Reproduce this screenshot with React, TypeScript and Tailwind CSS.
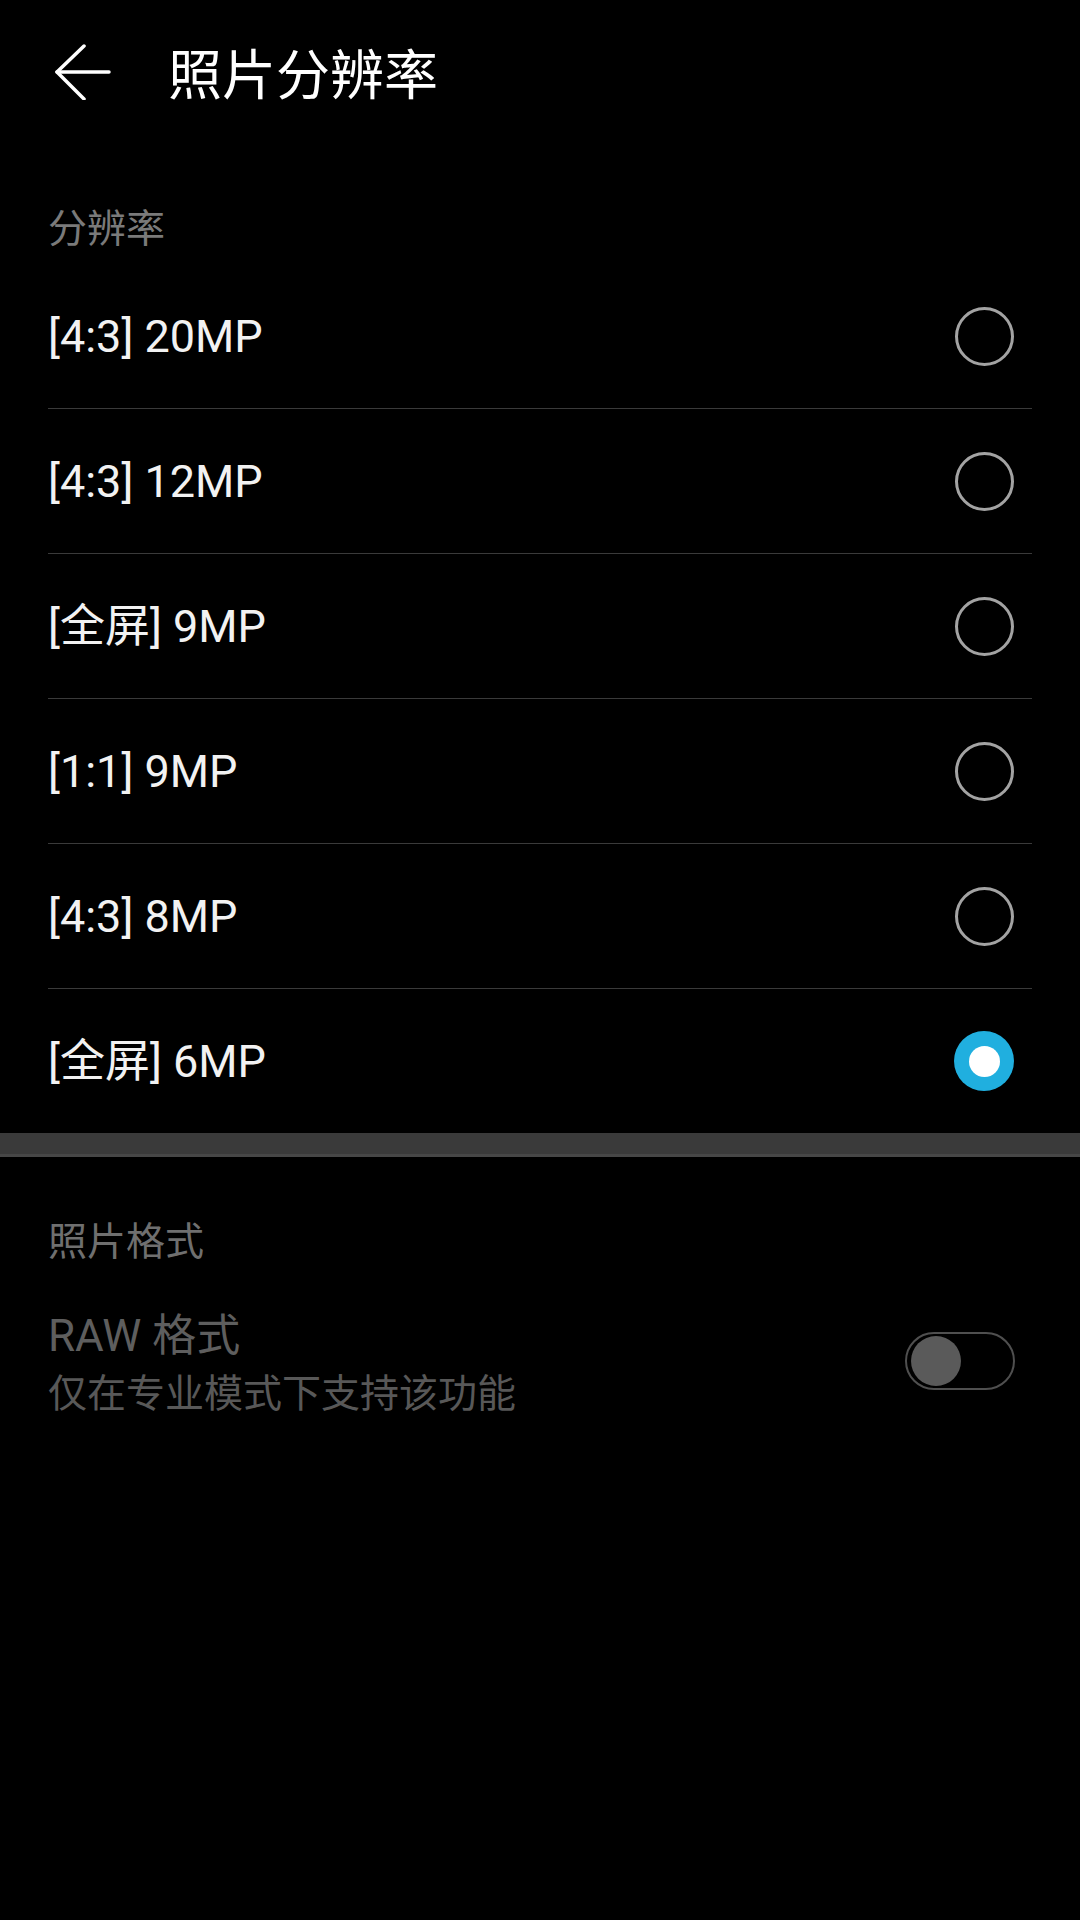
import React from "react";

const latin = "font-['Roboto','Noto_Sans_CJK_SC',sans-serif]";
const cjk = "font-['Noto_Sans_CJK_SC','Roboto',sans-serif]";

const items: { label: string; selected?: boolean }[] = [
  { label: "[4:3] 20MP" },
  { label: "[4:3] 12MP" },
  { label: "[全屏] 9MP" },
  { label: "[1:1] 9MP" },
  { label: "[4:3] 8MP" },
  { label: "[全屏] 6MP", selected: true },
];

function Radio({ selected }: { selected?: boolean }) {
  if (selected) {
    return (
      <div className="w-[60px] h-[60px] rounded-full bg-[#20afdf] flex items-center justify-center">
        <div className="w-[31px] h-[31px] rounded-full bg-white" />
      </div>
    );
  }
  return <div className="w-[59px] h-[59px] rounded-full border-[3px] border-[#a3a3a3]" />;
}

export default function App() {
  return (
    <div className="w-[1080px] h-[1920px] bg-black overflow-hidden">
      {/* Header */}
      <div className="h-[144px] flex items-center pl-[55px]">
        <svg width="56" height="56" viewBox="0 0 56 56" fill="none" stroke="#ffffff" strokeWidth="3.5" strokeLinecap="round" strokeLinejoin="round">
          <path d="M2 28 L54 28" />
          <path d="M29 2 L2 28 L29 55" />
        </svg>
        <div className={`${cjk} ml-[57px] text-[54px] leading-none text-white`}>照片分辨率</div>
      </div>

      {/* Section: 分辨率 */}
      <div className="h-[120px] flex items-end pb-[19px] pl-[48px]">
        <div className={`${cjk} text-[39px] leading-none text-[#7a7a7a]`}>分辨率</div>
      </div>

      <div className="mx-[48px]">
        {items.map((it, i) => (
          <div key={i}>
            <div className="h-[144px] flex items-center justify-between pr-[18px]">
              <div className={`${latin} text-[45px] leading-none text-[#f2f2f2]`}>{it.label}</div>
              <Radio selected={it.selected} />
            </div>
            {i < items.length - 1 && <div className="h-px bg-[#3a3a3a]" />}
          </div>
        ))}
      </div>

      {/* Separator band */}
      <div className="h-[24px] bg-[#3a3a3a] border-b-[3px] border-[#474747]" />

      {/* Section: 照片格式 */}
      <div className="h-[120px] flex items-end pb-[19px] pl-[48px]">
        <div className={`${cjk} text-[39px] leading-none text-[#6f6f6f]`}>照片格式</div>
      </div>

      <div className="mx-[48px] h-[168px] flex items-center justify-between pr-[17px]">
        <div className="flex flex-col pt-[6px]">
          <div className={`${latin} text-[44px] leading-[52px] text-[#5e5e5e]`}>RAW 格式</div>
          <div className={`${cjk} text-[39px] leading-[56px] text-[#585858]`}>仅在专业模式下支持该功能</div>
        </div>
        <div className="w-[110px] h-[58px] rounded-full border-2 border-[#4f4f4f] flex items-center pl-[4px]">
          <div className="w-[50px] h-[50px] rounded-full bg-[#5a5a5a]" />
        </div>
      </div>
    </div>
  );
}
